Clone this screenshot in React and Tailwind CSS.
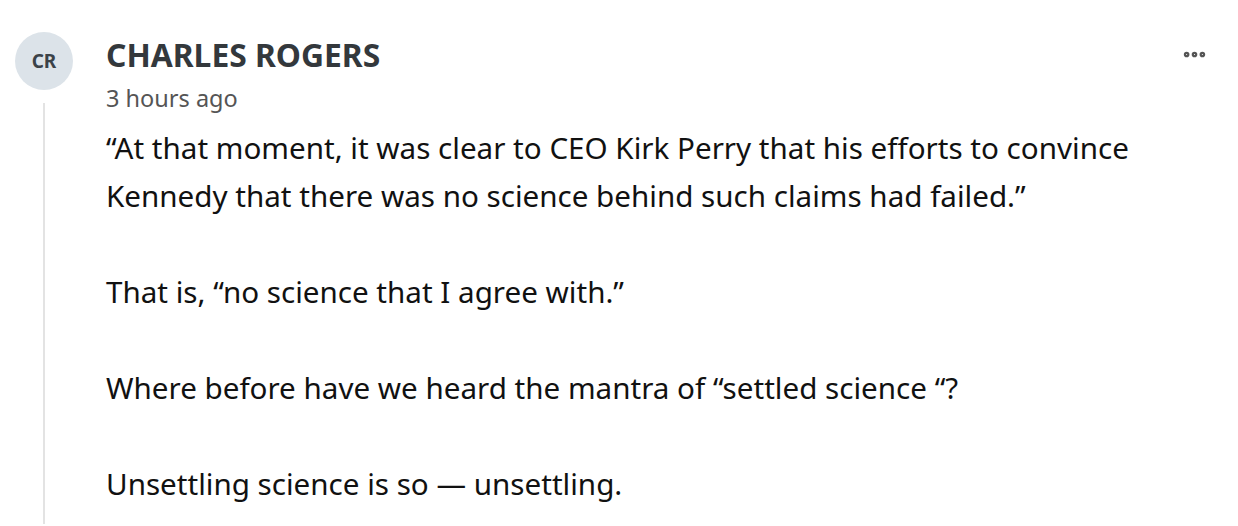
import { MoreHorizontal } from "lucide-react";

const paragraphs = [
  "“At that moment, it was clear to CEO Kirk Perry that his efforts to convince Kennedy that there was no science behind such claims had failed.”",
  "That is, “no science that I agree with.”",
  "Where before have we heard the mantra of “settled science “?",
  "Unsettling science is so — unsettling.",
];

const Comment = () => {
  return (
    <div className="flex w-full bg-white pl-[15px] pt-[32px] font-['Noto_Sans',sans-serif]">
      <div className="flex w-[58px] flex-col items-center">
        <div className="flex h-[58px] w-[58px] items-center justify-center rounded-full bg-[#dce3e9] text-[19px] font-bold text-[#3b4248]">
          CR
        </div>
        <div className="mt-[13px] w-[2px] flex-1 bg-[#e3e3e3]" />
      </div>
      <div className="ml-[33px] flex-1">
        <div className="flex items-start justify-between">
          <div className="text-[31.8px] font-bold leading-[46px] text-[#33383c]">
            CHARLES ROGERS
          </div>
          <button className="mr-[30px] mt-[9px] text-[#555]">
            <MoreHorizontal size={27} strokeWidth={3} />
          </button>
        </div>
        <div className="mt-[2px] text-[23.5px] leading-[36px] text-[#555]">3 hours ago</div>
        <div className="mt-[8px] space-y-[48px] pr-[60px] pb-[16px] text-[29.6px] leading-[48px] text-[#111]">
          {paragraphs.map((p, i) => (
            <p key={i}>{p}</p>
          ))}
        </div>
      </div>
    </div>
  );
};

export default function App() {
  return <Comment />;
}
